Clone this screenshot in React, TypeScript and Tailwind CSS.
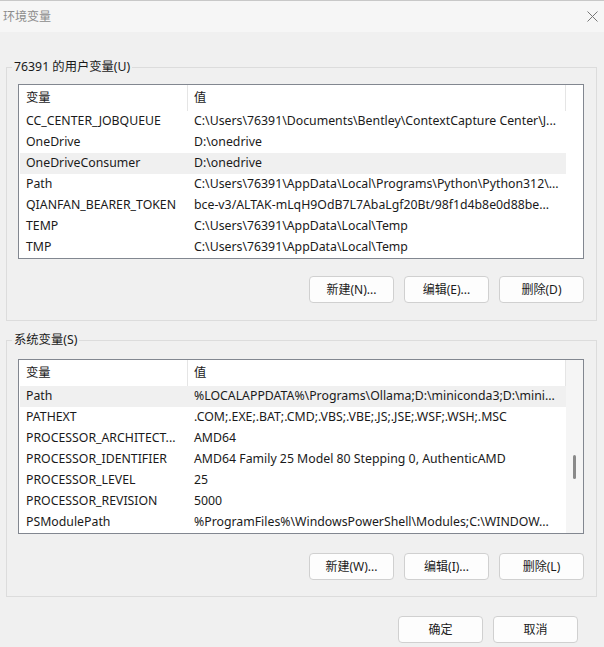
import { ReactNode } from "react";

type EnvVar = { name: string; value: string };

const userVars: EnvVar[] = [
  { name: "CC_CENTER_JOBQUEUE", value: "C:\\Users\\76391\\Documents\\Bentley\\ContextCapture Center\\J..." },
  { name: "OneDrive", value: "D:\\onedrive" },
  { name: "OneDriveConsumer", value: "D:\\onedrive" },
  { name: "Path", value: "C:\\Users\\76391\\AppData\\Local\\Programs\\Python\\Python312\\..." },
  { name: "QIANFAN_BEARER_TOKEN", value: "bce-v3/ALTAK-mLqH9OdB7L7AbaLgf20Bt/98f1d4b8e0d88be..." },
  { name: "TEMP", value: "C:\\Users\\76391\\AppData\\Local\\Temp" },
  { name: "TMP", value: "C:\\Users\\76391\\AppData\\Local\\Temp" },
];

const systemVars: EnvVar[] = [
  { name: "Path", value: "%LOCALAPPDATA%\\Programs\\Ollama;D:\\miniconda3;D:\\mini..." },
  { name: "PATHEXT", value: ".COM;.EXE;.BAT;.CMD;.VBS;.VBE;.JS;.JSE;.WSF;.WSH;.MSC" },
  { name: "PROCESSOR_ARCHITECT...", value: "AMD64" },
  { name: "PROCESSOR_IDENTIFIER", value: "AMD64 Family 25 Model 80 Stepping 0, AuthenticAMD" },
  { name: "PROCESSOR_LEVEL", value: "25" },
  { name: "PROCESSOR_REVISION", value: "5000" },
  { name: "PSModulePath", value: "%ProgramFiles%\\WindowsPowerShell\\Modules;C:\\WINDOW..." },
];

function Button({ children }: { children: ReactNode }) {
  return (
    <button className="w-[85px] h-[27px] rounded-[4px] border border-[#d0d0d0] bg-[#fdfdfd] text-[12px] text-[#1b1b1b] flex items-center justify-center">
      {children}
    </button>
  );
}

function VarList({ vars, selected, scrollbar }: { vars: EnvVar[]; selected: number; scrollbar?: boolean }) {
  return (
    <div className="h-[175px] border border-[#828790] bg-white flex">
      <div className="w-[547px] flex flex-col">
        <div className="h-[26px] flex items-center border-r border-[#e5e5e5]">
          <div className="w-[169px] h-full pl-[7px] flex items-center border-r border-[#e5e5e5]">变量</div>
          <div className="pl-[6px]">值</div>
        </div>
        {vars.map((v, i) => (
          <div
            key={v.name}
            className={"h-[21px] ml-[1px] flex items-center whitespace-nowrap " + (i === selected ? "bg-[#f0f0f0]" : "")}
          >
            <div className="w-[168px] pl-[6px] overflow-hidden">{v.name}</div>
            <div className="flex-1 pl-[6px] overflow-hidden">{v.value}</div>
          </div>
        ))}
      </div>
      <div className={"flex-1 flex justify-center " + (scrollbar ? "bg-[#f5f5f5]" : "")}>
        {scrollbar && <div className="w-[3px] h-[24px] mt-[95px] rounded-full bg-[#8a8a8a]" />}
      </div>
    </div>
  );
}

export default function App() {
  return (
    <div
      className="w-[604px] h-[647px] bg-[#f0f0f0] text-[12.3px] text-[#1a1a1a] overflow-hidden flex flex-col"
      style={{ fontFamily: '"Noto Sans", "Noto Sans CJK SC", sans-serif' }}
    >
      <div className="h-[32px] bg-[#f6f6f6] border-t border-[#c8c8c8] flex items-center justify-between pl-[3px] pr-[6px]">
        <span className="text-[#8c8c8c] text-[12px]">环境变量</span>
        <svg width="11" height="11" viewBox="0 0 11 11" className="text-[#777]">
          <path d="M0.5 0.5L10.5 10.5M10.5 0.5L0.5 10.5" stroke="currentColor" strokeWidth="1" />
        </svg>
      </div>

      <div className="flex flex-col pl-[6px] pr-[7px]">
        <fieldset className="mt-[26px] border border-[#dcdcdc] pl-[11px] pr-[12px] pt-[8px] pb-[17px]">
          <legend className="ml-[-6px] px-[2px] leading-[18px]">76391 的用户变量(U)</legend>
          <VarList vars={userVars} selected={2} />
          <div className="mt-[17px] flex justify-end gap-[10px]">
            <Button>新建(N)...</Button>
            <Button>编辑(E)...</Button>
            <Button>删除(D)</Button>
          </div>
        </fieldset>

        <fieldset className="mt-[10px] border border-[#dcdcdc] pl-[11px] pr-[12px] pt-[10px] pb-[16px]">
          <legend className="ml-[-6px] px-[2px] leading-[18px]">系统变量(S)</legend>
          <VarList vars={systemVars} selected={0} scrollbar />
          <div className="mt-[19px] flex justify-end gap-[10px]">
            <Button>新建(W)...</Button>
            <Button>编辑(I)...</Button>
            <Button>删除(L)</Button>
          </div>
        </fieldset>
      </div>

      <div className="mt-[19px] flex justify-end gap-[10px] pr-[26px]">
        <Button>确定</Button>
        <Button>取消</Button>
      </div>
    </div>
  );
}
